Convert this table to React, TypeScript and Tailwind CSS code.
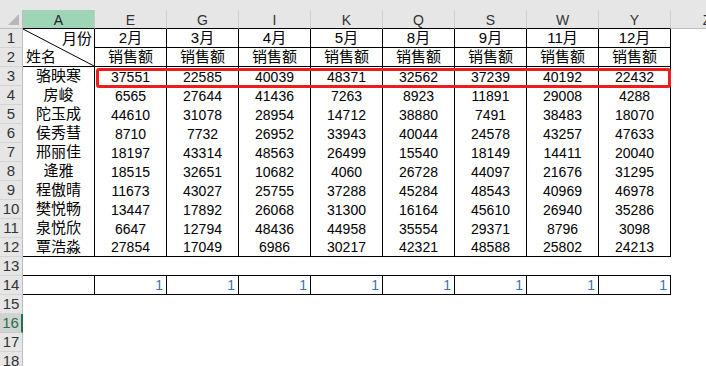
import React from "react";

const columns = ["E", "G", "I", "K", "Q", "S", "W", "Y"];
const months = ["2月", "3月", "4月", "5月", "8月", "9月", "11月", "12月"];

const people: { name: string; values: number[] }[] = [
    { name: "骆映寒", values: [37551, 22585, 40039, 48371, 32562, 37239, 40192, 22432] },
    { name: "房峻", values: [6565, 27644, 41436, 7263, 8923, 11891, 29008, 4288] },
    { name: "陀玉成", values: [44610, 31078, 28954, 14712, 38880, 7491, 38483, 18070] },
    { name: "侯秀彗", values: [8710, 7732, 26952, 33943, 40044, 24578, 43257, 47633] },
    { name: "邢丽佳", values: [18197, 43314, 48563, 26499, 15540, 18149, 14411, 20040] },
    { name: "逄雅", values: [18515, 32651, 10682, 4060, 26728, 44097, 21676, 31295] },
    { name: "程傲晴", values: [11673, 43027, 25755, 37288, 45284, 48543, 40969, 46978] },
    { name: "樊悦畅", values: [13447, 17892, 26068, 31300, 16164, 45610, 26940, 35286] },
    { name: "泉悦欣", values: [6647, 12794, 48436, 44958, 35554, 29371, 8796, 3098] },
    { name: "覃浩淼", values: [27854, 17049, 6986, 30217, 42321, 48588, 25802, 24213] },
];

const font = { fontFamily: '"Liberation Sans", "Noto Sans CJK SC", sans-serif' };

function RowHead({ n, active = false }: { n: number; active?: boolean }) {
    if (active) {
        return (
            <div className="flex h-[19px] items-center justify-center border-b border-r-2 border-b-[#c8c8c8] border-r-[#217346] bg-[#d2d2d2] pt-px text-[15px] text-[#217346]">
                {n}
            </div>
        );
    }
    return (
        <div className="flex h-[19px] items-center justify-center border-b border-r border-b-[#d4d4d4] border-r-[#bdbdbd] bg-[#e6e6e6] pt-px text-[15px] text-[#333]">
            {n}
        </div>
    );
}

function Blank({ count }: { count: number }) {
    return (
        <>
            {Array.from({ length: count }).map((_, i) => (
                <div key={i} className="h-[19px] bg-white" />
            ))}
        </>
    );
}

export default function App() {
    return (
        <div className="relative h-[366px] w-[706px] overflow-hidden bg-white text-black" style={font}>
            <div className="h-[10px] bg-[#e6e6e6]" />

            <div className="grid grid-cols-[23px_repeat(10,72px)] auto-rows-[19px]">
                {/* column headers */}
                <div className="relative h-[19px] border-b border-r border-b-[#bdbdbd] border-r-[#bdbdbd] bg-[#e6e6e6]">
                    <svg className="absolute right-[3px] bottom-[3px]" width="11" height="11" viewBox="0 0 11 11">
                        <polygon points="11,0 11,11 0,11" fill="#b8b8b8" />
                    </svg>
                </div>
                <div className="flex h-[19px] items-center justify-center border-b border-r border-b-black border-r-[#c8c8c8] bg-[#9fd5b7] pt-[3px] text-[14px] text-[#222]">
                    A
                </div>
                {columns.map((c) => (
                    <div
                        key={c}
                        className="flex h-[19px] items-center justify-center border-b border-r border-b-black border-r-[#d0d0d0] bg-[#e6e6e6] pt-[3px] text-[14px] text-[#333]"
                    >
                        {c}
                    </div>
                ))}
                <div className="flex h-[19px] items-center justify-center border-b border-b-[#bdbdbd] bg-[#e6e6e6] pt-[3px] text-[14px] text-[#333]">
                    Z
                </div>

                {/* row 1 */}
                <RowHead n={1} />
                <div className="relative row-span-2 border-b border-r border-black">
                    <svg className="absolute inset-0 h-full w-full" viewBox="0 0 100 100" preserveAspectRatio="none">
                        <line x1="0" y1="0" x2="100" y2="100" stroke="#000" strokeWidth="1" vectorEffect="non-scaling-stroke" />
                    </svg>
                    <div className="absolute right-[2px] top-0 text-[15px] leading-[19px]">月份</div>
                    <div className="absolute bottom-0 left-[3px] text-[15px] leading-[19px]">姓名</div>
                </div>
                {months.map((m) => (
                    <div key={m} className="flex items-center justify-center border-b border-r border-black text-[15px]">
                        {m}
                    </div>
                ))}
                <Blank count={1} />

                {/* row 2 */}
                <RowHead n={2} />
                {months.map((m) => (
                    <div key={m} className="flex items-center justify-center border-b border-r border-black text-[15px]">
                        销售额
                    </div>
                ))}
                <Blank count={1} />

                {/* rows 3-12 */}
                {people.map((p, i) => {
                    const last = i === people.length - 1;
                    const cell = last
                        ? "flex items-center justify-center border-b border-r border-black pt-px text-[14px]"
                        : "flex items-center justify-center border-r border-black pt-px text-[14px]";
                    const nameCell = last
                        ? "flex items-center justify-center border-b border-r border-black text-[15px]"
                        : "flex items-center justify-center border-r border-black text-[15px]";
                    return (
                        <React.Fragment key={p.name}>
                            <RowHead n={i + 3} />
                            <div className={nameCell}>{p.name}</div>
                            {p.values.map((v, j) => (
                                <div key={j} className={cell}>
                                    {v}
                                </div>
                            ))}
                            <Blank count={1} />
                        </React.Fragment>
                    );
                })}

                {/* row 13 */}
                <RowHead n={13} />
                {Array.from({ length: 9 }).map((_, i) => (
                    <div key={i} className="border-b border-black" />
                ))}
                <Blank count={1} />

                {/* row 14 */}
                <RowHead n={14} />
                <div className="border-b border-r border-black" />
                {columns.map((c) => (
                    <div key={c} className="flex items-center justify-end border-b border-r border-black pr-[3px] pt-px text-[14px] text-[#3f72b5]">
                        1
                    </div>
                ))}
                <Blank count={1} />

                {[15, 16, 17, 18].map((n) => (
                    <React.Fragment key={n}>
                        <RowHead n={n} active={n === 16} />
                        <Blank count={10} />
                    </React.Fragment>
                ))}
            </div>

            {/* highlight around row 3 */}
            <div className="pointer-events-none absolute left-[96px] top-[68px] h-[20px] w-[575px] rounded-[3px] border-[3px] border-[#f01c1c]" />
        </div>
    );
}
